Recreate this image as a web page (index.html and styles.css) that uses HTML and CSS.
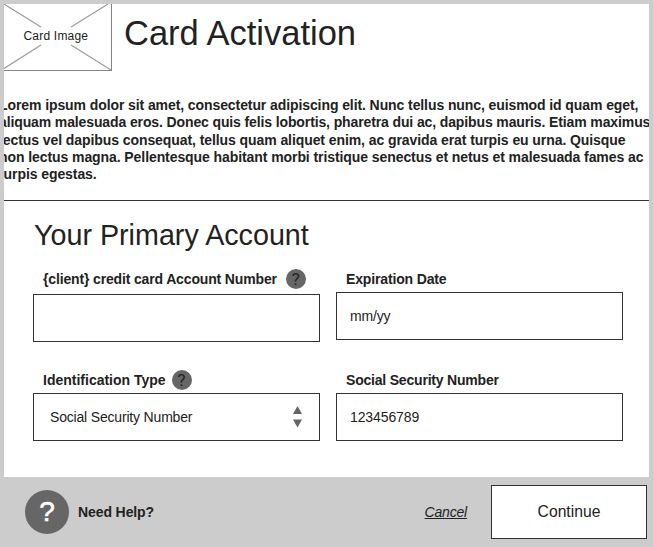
FILE: index.html
```html
<!DOCTYPE html>
<html lang="en">
<head>
<meta charset="utf-8">
<title>Card Activation</title>
<link rel="stylesheet" href="styles.css">
</head>
<body>
<main class="panel">
  <header class="header">
    <div class="card-image">
      <svg class="card-cross" width="108" height="67" viewBox="0 0 108 67" fill="none" stroke="#999" stroke-width="1.1"><path d="M0 0 37 23M67 23 104 0M0 64.5 37 41M67 41 107 66"/><path d="M107.5 0V66.5H0" stroke="#858585"/></svg>
      <span class="card-label">Card Image</span>
    </div>
    <h1 class="title">Card Activation</h1>
  </header>
  <p class="intro">Lorem ipsum dolor sit amet, consectetur adipiscing elit. Nunc tellus nunc, euismod id quam eget,<br><span class="tight">aliquam malesuada eros. Donec quis felis lobortis, pharetra dui ac, dapibus mauris. Etiam maximus</span><br><span class="loose">lectus vel dapibus consequat, tellus quam aliquet enim, ac gravida erat turpis eu urna. Quisque</span><br><span class="loose">non lectus magna. Pellentesque habitant morbi tristique senectus et netus et malesuada fames ac</span><br><span class="loose">turpis egestas.</span></p>
  <section class="account">
    <h2 class="subtitle">Your Primary Account</h2>
    <div class="fields">
      <div class="field field-number">
        <div class="label"><span>{client} credit card Account Number</span><span class="hint">?</span></div>
        <div class="box"></div>
      </div>
      <div class="field field-date">
        <div class="label"><span>Expiration Date</span></div>
        <div class="box">mm/yy</div>
      </div>
      <div class="field">
        <div class="label label-type"><span>Identification Type</span><span class="hint">?</span></div>
        <div class="box select"><span>Social Security Number</span>
          <svg width="9" height="22" viewBox="0 0 9 22" fill="#666"><path d="M4.5 0 9 8H0zM0 13.5h9L4.5 21.5z"/></svg>
        </div>
      </div>
      <div class="field">
        <div class="label label-ssn"><span>Social Security Number</span></div>
        <div class="box digits">123456789</div>
      </div>
    </div>
  </section>
</main>
<footer class="footer">
  <span class="help-icon">?</span>
  <span class="help">Need Help?</span>
  <a class="cancel">Cancel</a>
  <button class="continue">Continue</button>
</footer>
</body>
</html>
```
FILE: styles.css
```css
* { box-sizing: border-box; }
body {
  margin: 0;
  width: 653px;
  height: 547px;
  overflow: hidden;
  background: #ccc;
  color: #222;
  font-family: "Liberation Sans", Arial, sans-serif;
}
.panel {
  height: 473px;
  margin: 4px 4px 0;
  overflow: hidden;
  background: #fff;
}
.header { display: flex; height: 67px; }
.card-image {
  position: relative;
  width: 108px;
  height: 67px;
}
.card-cross { display: block; }
.card-label {
  position: absolute;
  left: 19.5px;
  top: 24px;
  font-size: 12px;
  line-height: 16px;
  letter-spacing: 0.2px;
  white-space: nowrap;
}
.title {
  margin: 8px 0 0 12px;
  font-size: 34.5px;
  font-weight: 400;
  line-height: 42px;
  white-space: nowrap;
}
.intro {
  height: 130px;
  margin: 0 0 0 -5px;
  padding-top: 26px;
  border-bottom: 1px solid #333;
  font-size: 14px;
  font-weight: 700;
  line-height: 17.3px;
  letter-spacing: -0.09px;
  white-space: nowrap;
}
.tight { letter-spacing: -0.12px; }
.loose { letter-spacing: -0.08px; }
.account { padding: 16px 26px 0 29px; }
.subtitle {
  margin: 0;
  padding-left: 1px;
  font-size: 28.7px;
  font-weight: 400;
  line-height: 36px;
  white-space: nowrap;
}
.fields {
  display: grid;
  grid-template-columns: 287px 287px;
  grid-template-rows: 102px 87px;
  column-gap: 16px;
}
.label {
  display: flex;
  align-items: center;
  gap: 9px;
  height: 38px;
  padding-left: 10px;
  padding-top: 12px;
  font-size: 14px;
  font-weight: 700;
  letter-spacing: -0.15px;
  line-height: 20px;
  white-space: nowrap;
}
.field-number .label { height: 41px; padding-top: 10px; }
.field-date .label { height: 39px; padding-top: 13px; }
.label-type { gap: 6px; letter-spacing: 0; }
.label-ssn { letter-spacing: -0.2px; }
.hint {
  width: 20px;
  height: 20px;
  border-radius: 50%;
  background: #666;
  font-family: Roboto, "Liberation Sans", sans-serif;
  font-size: 17px;
  font-weight: 400;
  letter-spacing: 0;
  line-height: 20px;
  text-align: center;
}
.box {
  display: flex;
  align-items: center;
  height: 48px;
  padding: 0 13px;
  border: 1px solid #333;
  font-size: 14px;
  letter-spacing: -0.18px;
}
.digits { letter-spacing: -0.1px; }
.select { justify-content: space-between; padding: 0 17px 0 16px; }
.footer {
  display: flex;
  align-items: center;
  height: 70px;
  padding: 0 6px 0 25px;
}
.help-icon {
  width: 44px;
  height: 44px;
  border-radius: 50%;
  background: #666;
  color: #fff;
  font-size: 28px;
  -webkit-text-stroke: 0.6px #fff;
  line-height: 43px;
  text-align: center;
}
.help {
  margin-left: 9px;
  font-size: 14px;
  font-weight: 700;
  letter-spacing: -0.1px;
}
.cancel {
  margin-left: auto;
  font-size: 14px;
  letter-spacing: -0.2px;
  font-style: italic;
  text-decoration: underline;
}
.continue {
  width: 156px;
  height: 54px;
  margin-left: 24px;
  border: 1px solid #333;
  background: #fff;
  color: #222;
  font: 15.7px "Liberation Sans", Arial, sans-serif;
}
```
